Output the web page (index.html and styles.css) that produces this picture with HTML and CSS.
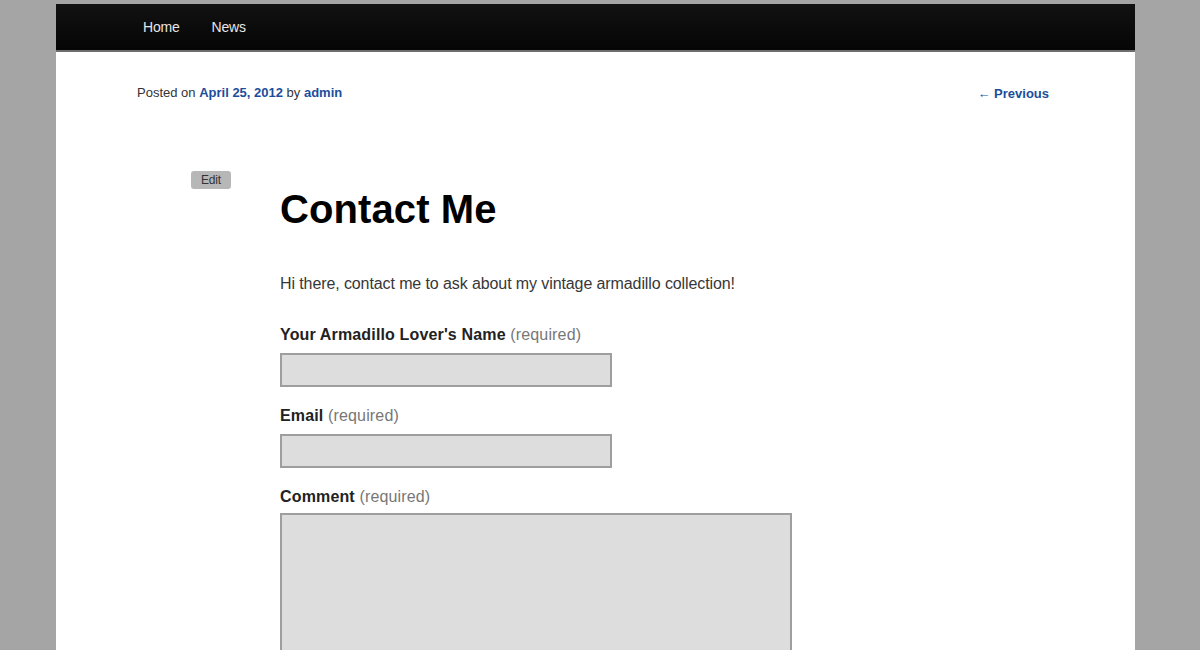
FILE: index.html
```html
<!DOCTYPE html>
<html lang="en">
<head>
<meta charset="utf-8">
<title>Contact Me</title>
<link rel="stylesheet" href="styles.css">
</head>
<body>
<div class="page">
  <nav class="nav">
    <a href="#" class="nav-link">Home</a>
    <a href="#" class="nav-link">News</a>
  </nav>
  <div class="meta-row">
    <div class="posted">Posted on <a href="#" class="blue">April 25, 2012</a> by <a href="#" class="blue">admin</a></div>
    <a href="#" class="blue prev">&larr; Previous</a>
  </div>
  <div class="entry">
    <div class="edit-col"><a href="#" class="edit">Edit</a></div>
    <div class="content">
      <h1 class="title">Contact Me</h1>
      <p class="intro">Hi there, contact me to ask about my vintage armadillo collection!</p>
      <form class="form">
        <label class="label">Your Armadillo Lover's Name <span class="req">(required)</span></label>
        <input class="field" type="text">
        <label class="label">Email <span class="req">(required)</span></label>
        <input class="field" type="text">
        <label class="label label-last">Comment <span class="req">(required)</span></label>
        <textarea class="area"></textarea>
      </form>
    </div>
  </div>
</div>
</body>
</html>
```
FILE: styles.css
```css
html, body {
  margin: 0;
  padding: 0;
}
body {
  background: #a5a5a5;
  font-family: "Liberation Sans", Arial, sans-serif;
  color: #333;
  height: 650px;
  overflow: hidden;
}
.page {
  margin-left: 56px;
  margin-top: 4px;
  width: 1079px;
  min-height: 700px;
  background: #fff;
}
.nav {
  height: 46px;
  background: linear-gradient(#121212, #050505);
  border-bottom: 2px solid #6e6e6e;
  display: flex;
  align-items: center;
  padding-left: 87px;
  gap: 32px;
}
.nav-link {
  color: #e6e6e6;
  text-decoration: none;
  font-size: 14px;
  letter-spacing: -0.2px;
}
.meta-row {
  display: flex;
  justify-content: space-between;
  margin-top: 32px;
  padding: 0 86px 0 81px;
  font-size: 13px;
  line-height: 18px;
  letter-spacing: 0;
}
.posted {
  color: #333;
}
.blue {
  color: #1b4e9b;
  font-weight: bold;
  text-decoration: none;
}
.prev {
  margin-top: 1px;
}
.entry {
  display: flex;
  margin-top: 67px;
  padding-left: 135px;
}
.edit-col {
  width: 89px;
}
.edit {
  display: inline-block;
  background: #b7b7b7;
  color: #333;
  font-size: 12px;
  line-height: 18px;
  padding: 0 10px;
  border-radius: 3px;
  text-decoration: none;
  letter-spacing: -0.2px;
}
.content {
  padding-top: 15px;
}
.title {
  margin: 0;
  font-size: 40px;
  line-height: 48px;
  font-weight: bold;
  color: #000;
  letter-spacing: 0.1px;
}
.intro {
  margin: 39px 0 0;
  font-size: 16px;
  line-height: 24px;
  color: #373737;
  letter-spacing: -0.1px;
}
.form {
  display: flex;
  flex-direction: column;
  align-items: flex-start;
  margin-top: 27px;
}
.label {
  font-size: 16px;
  line-height: 24px;
  font-weight: bold;
  color: #222;
  letter-spacing: 0.15px;
  margin-bottom: 6px;
}
.label-last {
  margin-bottom: 4px;
}
.req {
  font-weight: normal;
  color: #777;
}
.field {
  box-sizing: border-box;
  width: 332px;
  height: 34px;
  background: #ddd;
  border: 2px solid #9e9e9e;
  margin: 0 0 17px;
  padding: 0;
}
.area {
  box-sizing: border-box;
  width: 512px;
  height: 220px;
  background: #ddd;
  border: 2px solid #9e9e9e;
  margin: 0;
  padding: 0;
  resize: none;
}
```
